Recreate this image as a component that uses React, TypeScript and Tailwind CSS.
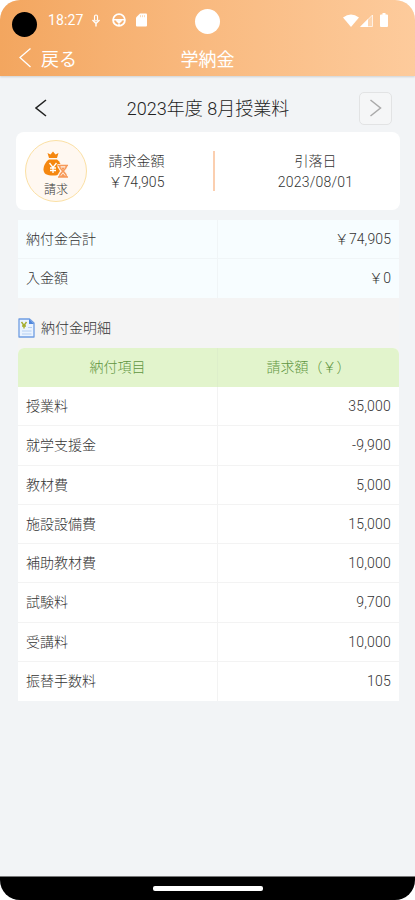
interface Item {
  name: string;
  amount: string;
}

const items: Item[] = [
  { name: '授業料', amount: '35,000' },
  { name: '就学支援金', amount: '-9,900' },
  { name: '教材費', amount: '5,000' },
  { name: '施設設備費', amount: '15,000' },
  { name: '補助教材費', amount: '10,000' },
  { name: '試験料', amount: '9,700' },
  { name: '受講料', amount: '10,000' },
  { name: '振替手数料', amount: '105' },
];

const totals: Item[] = [
  { name: '納付金合計', amount: '￥74,905' },
  { name: '入金額', amount: '￥0' },
];

function StatusBar() {
  return (
    <div className="relative flex h-[40px] items-center justify-between pr-[27px] pl-[12px] text-white">
      <div className="flex items-center">
        <div className="mt-[9px] size-[25px] rounded-full bg-black" />
        <span className="ml-[11px] text-[14px] leading-none font-normal tracking-[0.1px]">18:27</span>
        {/* mic */}
        <svg className="ml-[8px] h-[13px] w-[10px]" viewBox="0 0 10 13" fill="none" stroke="#fff">
          <rect x="3.5" y="1" width="3" height="6" rx="1.5" strokeWidth="1.2" />
          <path d="M1.5 6L5 9.5 8.5 6M5 9.5V12.5" strokeWidth="1.4" />
        </svg>
        {/* steering wheel */}
        <svg className="ml-[11px] size-[14px]" viewBox="0 0 14 14" fill="none" stroke="#fff">
          <circle cx="7" cy="7" r="5.9" strokeWidth="1.8" />
          <path d="M1 6.8h12M7 7v5.5M4.5 7.5L7 9.8l2.5-2.3" strokeWidth="1.6" />
        </svg>
        {/* sd card */}
        <svg className="ml-[10px] h-[14px] w-[11px]" viewBox="0 0 11 14">
          <path d="M4 .5h6a1 1 0 0 1 1 1v11a1 1 0 0 1-1 1H1a1 1 0 0 1-1-1v-8z" fill="#fff" />
          <path d="M4.5 2.2v2M6.5 2.2v2M8.5 2.2v2" stroke="#f8c898" strokeWidth=".7" />
        </svg>
      </div>
      <div className="absolute top-[9px] left-[195px] size-[25px] rounded-full bg-white" />
      <div className="flex items-center">
        <svg className="h-[13px] w-[16px]" viewBox="0 0 16 13">
          <path d="M0 3.6Q8-2.4 16 3.6L8 13z" fill="#fff" />
        </svg>
        <svg className="ml-[1px] size-[13px]" viewBox="0 0 13 13">
          <path d="M12.5 1v11.5H1z" fill="#fff" fillOpacity=".25" stroke="#fff" strokeOpacity=".7" strokeWidth="1" />
          <path d="M8 5v8H0z" fill="#fff" />
        </svg>
        <svg className="ml-[7px] h-[14px] w-[8px]" viewBox="0 0 8 14">
          <path d="M2.5 0h3v1.5H7a1 1 0 0 1 1 1V13a1 1 0 0 1-1 1H1a1 1 0 0 1-1-1V2.5a1 1 0 0 1 1-1h1.5z" fill="#fff" />
        </svg>
      </div>
    </div>
  );
}

function BillBadge() {
  return (
    <div className="flex size-[62px] flex-col items-center rounded-full border border-[#fbe0a4] bg-[#fff8f1] pt-[10px]">
      <svg className="h-[28px] w-[26px]" viewBox="0 0 26 28">
        <path d="M4.5 2l3 1.5L10 .5l2.5 3 3-1.5L14 7H6z" fill="#f5870f" />
        <path d="M6 8.5h8c3 2 4.5 6 4.5 9.5 0 5-2.5 6.5-8.5 6.5S.5 23 .5 18.5c0-4 2.5-8 5.5-10z" fill="#f5870f" />
        <path d="M6.5 12l3.5 4.5 3.5-4.5M10 16.5V22M7 17h6M7 19.5h6" fill="none" stroke="#fff" strokeWidth="1.3" />
        <path d="M14.5 13h11v3L23 20l2.5 4v3h-11v-3l2.5-4-2.5-4z" fill="#fff6ec" />
        <path
          d="M15 14.5h10M15 26h10M16.5 14.5c0 3 2 4 3.5 5.5 1.5-1.5 3.5-2.5 3.5-5.5M16.5 26c0-3 2-4.5 3.5-6 1.5 1.5 3.5 3 3.5 6"
          fill="none"
          stroke="#f79a5a"
          strokeWidth="1.6"
        />
        <path d="M17 26l3-3.5 3 3.5zM18 16.5h4l-2 2.5z" fill="#f79a5a" />
      </svg>
      <span className="mt-[3px] text-[12px] leading-[16px]">請求</span>
    </div>
  );
}

function DetailIcon() {
  return (
    <svg className="h-[20px] w-[17px]" viewBox="0 0 17 20">
      <path d="M1 1h10.5L16 5v14H1z" fill="#eaf3ff" stroke="#6f9de2" strokeWidth="1.3" strokeLinejoin="round" />
      <path d="M11 1l5 5h-5z" fill="#4f86dc" />
      <path d="M3.5 4L6 7.5 8.5 4M6 7.5V10.5M4 8h4" fill="none" stroke="#a5ad2e" strokeWidth="1.4" />
      <path d="M10 9.5h4M4 13h9.5M4 16h9.5" stroke="#b4cff2" strokeWidth="1" />
    </svg>
  );
}

export default function App() {
  return (
    <div className="h-[900px] w-[415px] bg-white font-['Roboto','Noto_Sans_CJK_JP',sans-serif] text-[14px] font-light text-[#333]">
      <div className="flex h-full flex-col overflow-hidden rounded-[20px] bg-[#f2f4f6]">
        <header className="h-[76px] shrink-0 bg-linear-to-r from-[#f3a65f] via-[#f9ba80] to-[#fdcb9c] shadow-[0_1px_2px_rgba(0,0,0,0.15)]">
          <StatusBar />
          <div className="grid h-[36px] grid-cols-3 items-center pt-[1px] text-[18px] leading-none font-normal text-white">
            <div className="flex items-center pl-[18px]">
              <svg className="-mt-[2px] h-[20px] w-[14px]" viewBox="0 0 14 20" fill="none" stroke="#fff" strokeWidth="1.3">
                <path d="M12.5 .5L2 9.5l10.5 9.5" />
              </svg>
              <span className="ml-[9px] pt-[3px]">戻る</span>
            </div>
            <h1 className="pt-[3px] text-center">学納金</h1>
          </div>
        </header>

        <div className="flex h-[56px] shrink-0 items-center justify-between pt-[8px] pr-[23px] pl-[34px]">
          <svg className="h-[18px] w-[13px]" viewBox="0 0 13 18" fill="none" stroke="#222" strokeWidth="1.6">
            <path d="M12 1L2 9l10 8" />
          </svg>
          <h2 className="ml-[10px] text-[18px] text-[#222]">2023年度 8月授業料</h2>
          <button className="flex size-[33px] items-center justify-center rounded-[5px] border border-[#e2e3e4] bg-[#f5f6f7]">
            <svg className="h-[18px] w-[13px]" viewBox="0 0 13 18" fill="none" stroke="#aaa" strokeWidth="1.5">
              <path d="M1.5 1L11.5 9l-10 8" />
            </svg>
          </button>
        </div>

        <section className="mr-[15px] ml-[16px] flex h-[78px] shrink-0 items-center rounded-[8px] bg-white pl-[9px]">
          <BillBadge />
          <div className="ml-[21px] w-[57px] pt-[1px] text-center leading-[21px] whitespace-nowrap">
            <p>請求金額</p>
            <p className="tracking-[0.1px]">￥74,905</p>
          </div>
          <div className="ml-[48px] h-[40px] w-[2px] bg-[#fbcfb0]" />
          <div className="flex-1 pt-[1px] pl-[16px] text-center leading-[21px]">
            <p>引落日</p>
            <p className="tracking-[0.2px]">2023/08/01</p>
          </div>
        </section>

        <div className="mt-[10px] mr-[16px] ml-[18px] h-[78px] shrink-0 divide-y divide-[#f0f5f7] bg-[#f7fdff]">
          {totals.map((row) => (
            <div key={row.name} className="grid h-[39px] grid-cols-[200px_1fr] leading-[38px]">
              <span className="border-r border-[#f0f5f7] pl-[8px]">{row.name}</span>
              <span className="pr-[8px] text-right tracking-[0.1px]">{row.amount}</span>
            </div>
          ))}
        </div>

        <div className="mr-[16px] ml-[18px] flex h-[50px] shrink-0 items-center bg-[#f4f4f4] pt-[10px]">
          <DetailIcon />
          <h3 className="ml-[6px]">納付金明細</h3>
        </div>

        <div className="mr-[16px] ml-[18px] shrink-0 bg-[#f4f4f4]">
          <div className="overflow-hidden rounded-t-[6px] bg-white">
            <div className="grid h-[39px] grid-cols-[200px_1fr] bg-[#e2f4cc] text-center leading-[38px] text-[#5f9440]">
              <span className="border-r border-[#ddeeca]">納付項目</span>
              <span>請求額（￥）</span>
            </div>
            <div className="grid h-[314px] grid-rows-8 divide-y divide-[#f3f3f3]">
              {items.map((item) => (
                <div key={item.name} className="grid grid-cols-[200px_1fr] leading-[39px]">
                  <span className="border-r border-[#f3f3f3] pl-[8px]">{item.name}</span>
                  <span className="pr-[8px] text-right tracking-[0.2px]">{item.amount}</span>
                </div>
              ))}
            </div>
          </div>
        </div>

        <footer className="mt-auto flex h-[24px] shrink-0 justify-center border-t border-[#777] bg-black pt-[9px]">
          <div className="h-[5px] w-[110px] rounded-[2px] bg-white" />
        </footer>
      </div>
    </div>
  );
}
